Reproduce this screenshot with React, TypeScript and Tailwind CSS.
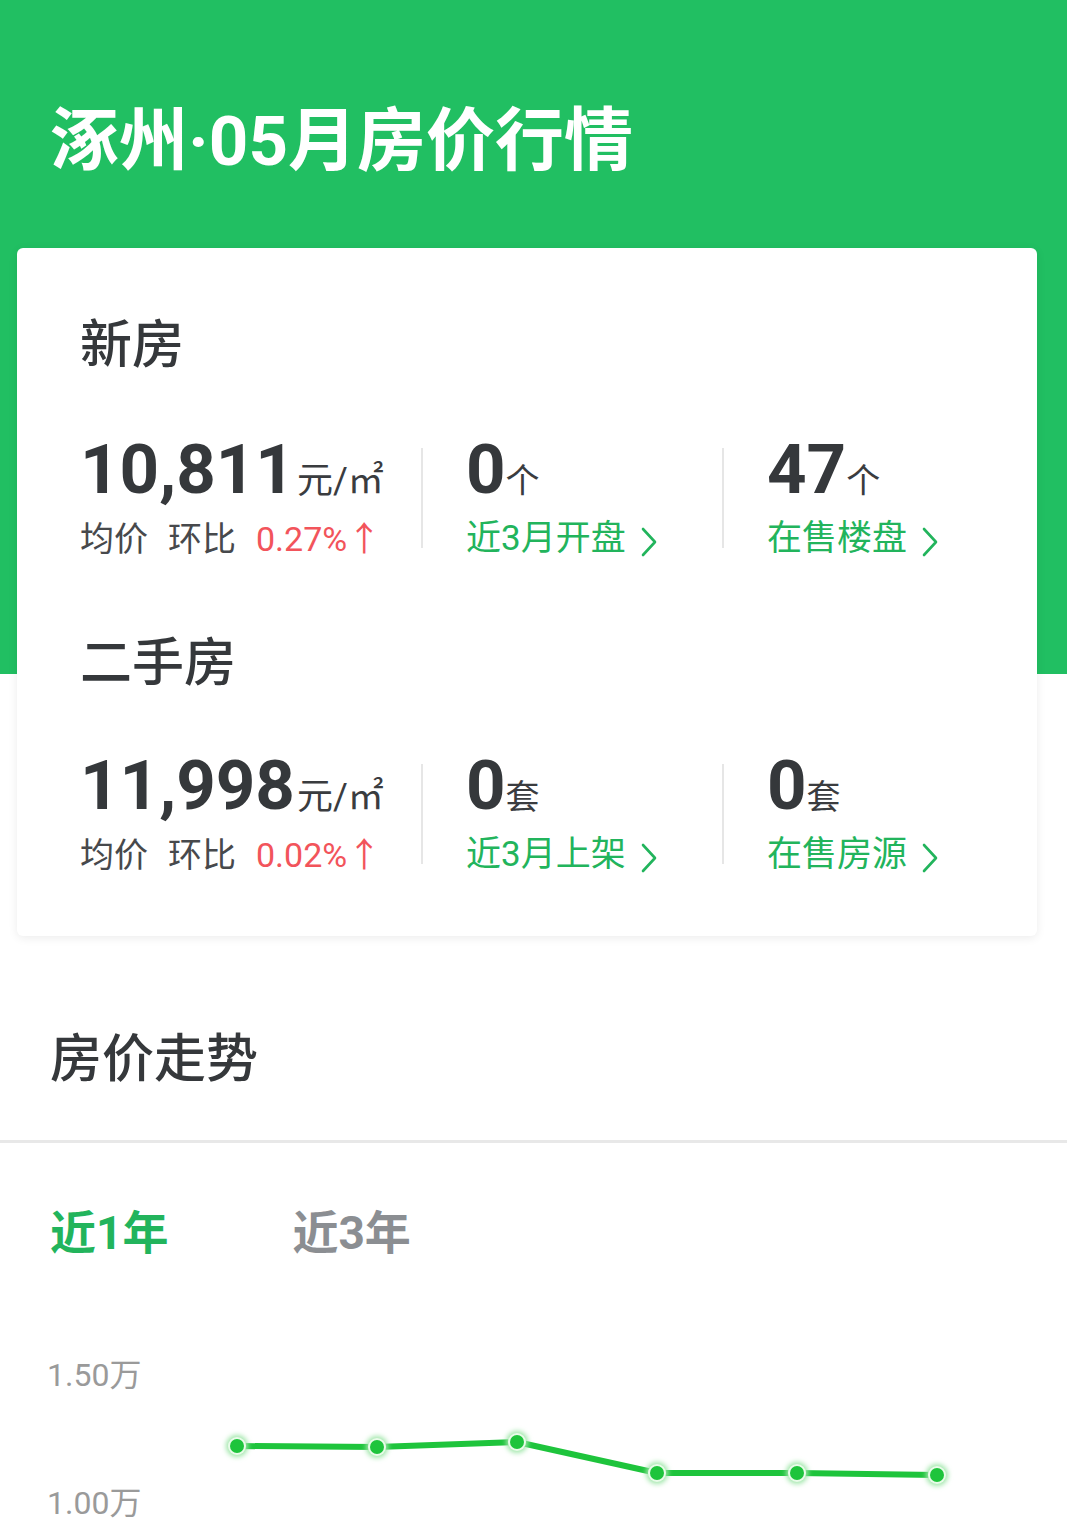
import React from 'react'

const font = { fontFamily: "Roboto, 'Noto Sans CJK SC', sans-serif" }

function Chevron() {
  return (
    <svg width="22" height="32" viewBox="0 0 22 32" className="ml-[12px] mt-[6px]">
      <path d="M5 3 L17 16 L5 29" fill="none" stroke="currentColor" strokeWidth="2.6" strokeLinecap="round" strokeLinejoin="round" />
    </svg>
  )
}

type Stat = { value: string; unit: string; label: string }

function StatRow({ price, change, stats }: { price: string; change: string; stats: Stat[] }) {
  return (
    <div className="flex items-center">
      <div className="w-[341px] shrink-0">
        <div className="flex items-baseline h-[76px]">
          <span className="text-[69px] font-bold leading-[76px] text-[#35383b]">{price}</span>
          <span className="text-[36px] leading-[76px] text-[#3a3c3f] ml-[2px]">元/㎡</span>
        </div>
        <div className="flex items-center h-[50px] mt-[6px] text-[34px] text-[#47494c]">
          <span>均价</span>
          <span className="ml-[20px]">环比</span>
          <span className="ml-[20px] text-[#f2545b]">{change}↑</span>
        </div>
      </div>
      {stats.map((s) => (
        <div key={s.label} className="flex items-center">
          <div className="w-[2px] h-[100px] bg-[#e6e6e6]" />
          <div className="w-[299px] pl-[43px]">
            <div className="flex items-baseline h-[76px]">
              <span className="text-[69px] font-bold leading-[76px] text-[#35383b]">{s.value}</span>
              <span className="text-[34px] leading-[76px] text-[#3a3c3f]">{s.unit}</span>
            </div>
            <div className="flex items-center h-[50px] mt-[6px] text-[35px] text-[#22b45c]">
              <span>{s.label}</span>
              <Chevron />
            </div>
          </div>
        </div>
      ))}
    </div>
  )
}

const points = [
  [237, 89], [377, 90], [517, 85], [657, 116], [797, 116], [937, 118],
]

export default function App() {
  return (
    <div className="w-[1067px] h-[1518px] overflow-hidden bg-white" style={font}>
      <div className="h-[674px] bg-[#21bf62] pt-[98px] pl-[50px]">
        <h1 className="text-[69px] font-bold leading-[88px] text-white">涿州·05月房价行情</h1>
      </div>

      <div className="-mt-[426px] ml-[17px] mr-[30px] bg-white rounded-[6px] shadow-[0_2px_10px_rgba(0,0,0,0.08)] px-[63px] pt-[68px] h-[688px]">
        <div className="text-[52px] font-medium leading-[60px] text-[#35383b]">新房</div>
        <div className="mt-[56px]">
          <StatRow
            price="10,811"
            change="0.27%"
            stats={[
              { value: '0', unit: '个', label: '近3月开盘' },
              { value: '47', unit: '个', label: '在售楼盘' },
            ]}
          />
        </div>
        <div className="mt-[70px] text-[52px] font-medium leading-[60px] text-[#35383b]">二手房</div>
        <div className="mt-[54px]">
          <StatRow
            price="11,998"
            change="0.02%"
            stats={[
              { value: '0', unit: '套', label: '近3月上架' },
              { value: '0', unit: '套', label: '在售房源' },
            ]}
          />
        </div>
      </div>

      <div className="pt-[92px] pl-[50px] h-[204px]">
        <h2 className="text-[52px] font-medium leading-[64px] text-[#35383b]">房价走势</h2>
      </div>
      <div className="h-[3px] bg-[#e8e8e8]" />

      <div className="flex pl-[50px] pt-[62px] text-[46px] font-bold leading-[56px]">
        <span className="text-[#22b45c]">近1年</span>
        <span className="ml-[124px] text-[#8b8e92]">近3年</span>
      </div>

      <div className="relative mt-[96px] h-[180px]">
        <div className="pl-[47px] flex flex-col gap-[92px] text-[32px] leading-[36px] text-[#9a9a9a]">
          <span>1.50万</span>
          <span>1.00万</span>
        </div>
        <svg className="absolute left-0 top-0" width="1067" height="180" viewBox="0 0 1067 180">
          <defs>
            <filter id="glow" x="-1" y="-1" width="3" height="3">
              <feGaussianBlur stdDeviation="2.5" />
            </filter>
          </defs>
          <polyline
            points={points.map((p) => p.join(',')).join(' ')}
            fill="none"
            stroke="#1ec43c"
            strokeWidth="6"
            strokeLinejoin="round"
          />
          {points.map(([x, y]) => (
            <g key={x}>
              <circle cx={x} cy={y} r="11" fill="#9ee6a8" filter="url(#glow)" />
              <circle cx={x} cy={y} r="9" fill="#e9fbe9" />
              <circle cx={x} cy={y} r="7" fill="#1ec43c" />
            </g>
          ))}
        </svg>
      </div>
    </div>
  )
}
